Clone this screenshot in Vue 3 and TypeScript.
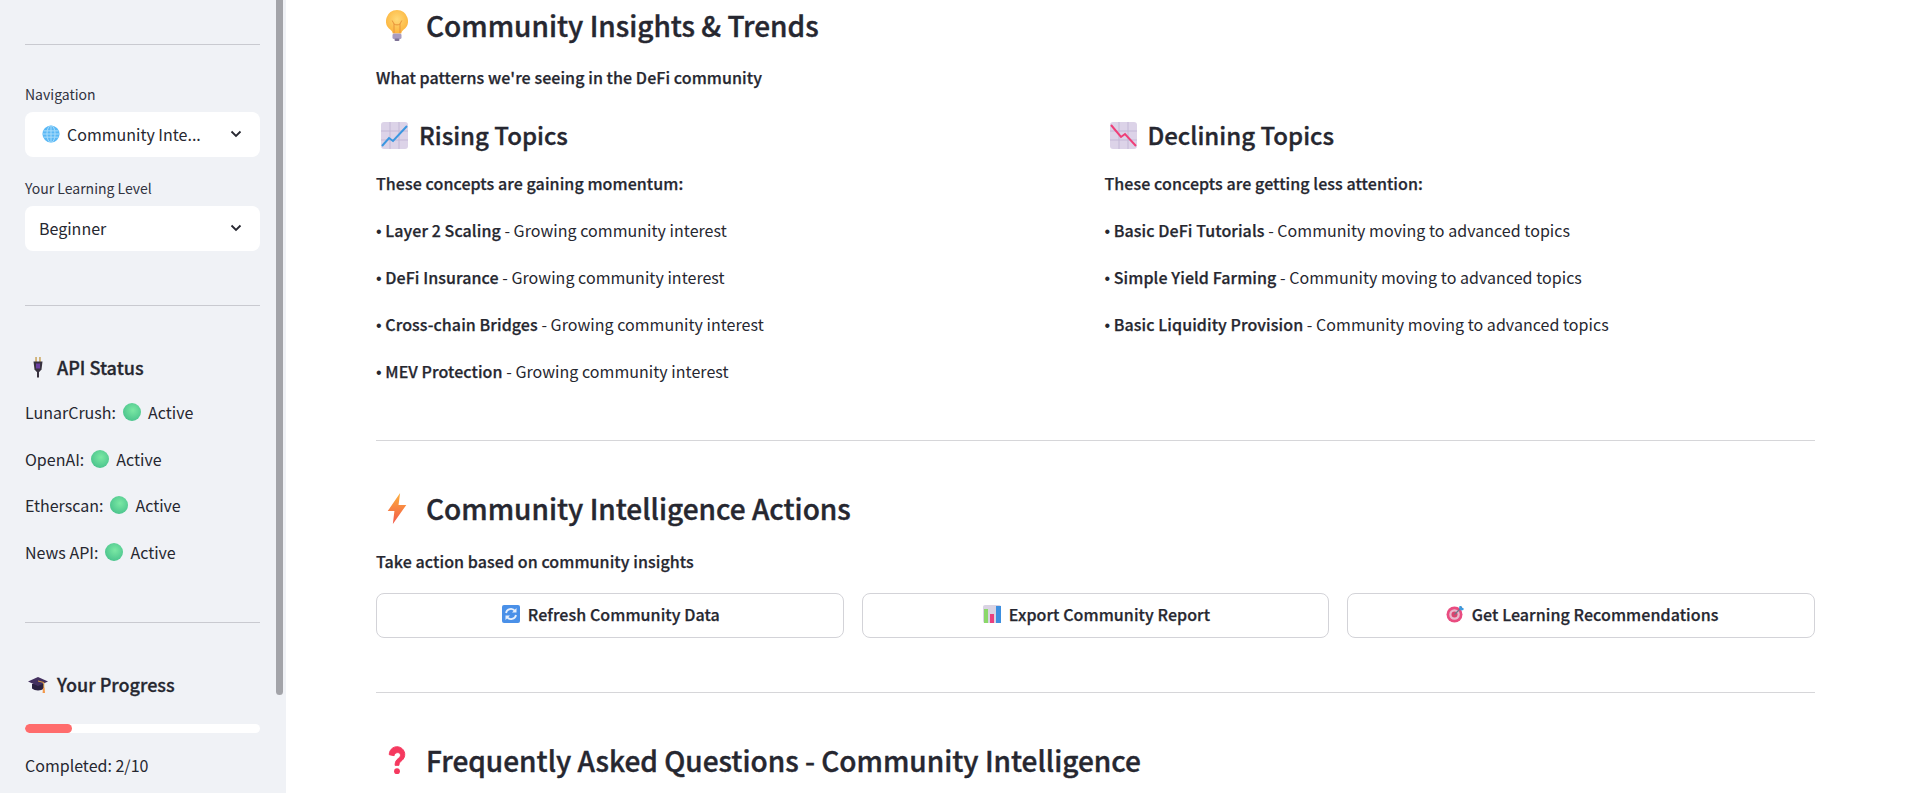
<template>
  <div class="page">
    <aside class="sidebar">
      <div class="scroll-thumb"></div>
      <hr class="side-rule first" />

      <label class="field-label">Navigation</label>
      <div class="select">
        <svg class="globe" viewBox="0 0 20 20">
          <circle cx="10" cy="10" r="9.500" fill="#5ab8f5" />
          <g fill="none" stroke="#a9ddfb" stroke-width="1.100">
            <ellipse cx="10" cy="10" rx="4.500" ry="9.500" />
            <path d="M10 .5v19M1.500 6.500h17M.5 10h19M1.500 13.500h17" />
          </g>
        </svg>
        <span class="select-value">Community Inte...</span>
        <svg class="chevron" viewBox="0 0 12 8"><path d="M1.500 1.500 6 6l4.500-4.500" fill="none" stroke="#262730" stroke-width="1.800" /></svg>
      </div>

      <label class="field-label second">Your Learning Level</label>
      <div class="select plain">
        <span class="select-value">Beginner</span>
        <svg class="chevron" viewBox="0 0 12 8"><path d="M1.500 1.500 6 6l4.500-4.500" fill="none" stroke="#262730" stroke-width="1.800" /></svg>
      </div>

      <hr class="side-rule api-rule" />

      <h4 class="side-title">
        <svg class="side-emoji" viewBox="0 0 22 22">
          <path d="M8.300 1h1.500v5H8.300zM12.200 1h1.500v5h-1.500z" fill="#c9a45a" />
          <path d="M6.500 5.500h9l-1 8-2.300 2.500h-2.400l-2.300-2.500z" fill="#38323f" />
          <rect x="9" y="7.500" width="4" height="5" fill="#6b3fa0" />
          <rect x="10" y="15" width="2" height="6.500" fill="#38323f" />
        </svg>
        API Status
      </h4>
      <p v-for="api in apis" :key="api" class="status-row">
        {{ api }}:
        <span class="dot"></span>
        Active
      </p>

      <hr class="side-rule progress-rule" />

      <h4 class="side-title">
        <svg class="side-emoji" viewBox="0 0 22 22">
          <path d="M5 11v4.500c3 2.500 9 2.500 12 0V11z" fill="#2a2140" />
          <path d="M1 8.500 11 4l10 4.500L11 13z" fill="#43305f" />
          <path d="M11 8l5.800 1.500v5" fill="none" stroke="#e0a040" stroke-width="1" />
          <path d="M16 14.500h1.600l.4 5.500h-2.400z" fill="#f2994a" />
        </svg>
        Your Progress
      </h4>
      <div class="progress"><div class="progress-fill" :style="{ width: progress + '%' }"></div></div>
      <p class="completed">Completed: 2/10</p>
    </aside>

    <main class="content">
      <h3 class="section-title top">
        <svg class="title-emoji" viewBox="0 0 22 31">
          <defs>
            <radialGradient id="bulbFill" cx="0.5" cy="0.4" r="0.6">
              <stop offset="0" stop-color="#ffd977" />
              <stop offset="1" stop-color="#fcb43c" />
            </radialGradient>
          </defs>
          <path d="M11 0a11 11 0 0 0-6.500 19.800c1.500 1.200 2 2.200 2.200 3.700h8.600c.2-1.500.7-2.500 2.200-3.700A11 11 0 0 0 11 0z" fill="url(#bulbFill)" />
          <path d="M8 23V14l-1.800-3.500M14 23v-9l1.800-3.500M8 14c2 1.200 4 1.200 6 0" fill="none" stroke="#e8933a" stroke-width="1" />
          <rect x="6.500" y="23.500" width="9" height="5.500" rx="1.500" fill="#a99cc0" />
          <rect x="8.500" y="28.500" width="5" height="2.500" rx="1.200" fill="#7d7196" />
        </svg>
        Community Insights &amp; Trends
      </h3>
      <p class="lead"><strong>What patterns we're seeing in the DeFi community</strong></p>

      <div class="columns">
        <section v-for="col in topicColumns" :key="col.title" class="topic-col">
          <h4 class="topic-title">
            <svg class="topic-emoji" viewBox="0 0 27 27">
              <rect width="27" height="27" rx="3" fill="#dcd3e8" />
              <path d="M9 0v27M18 0v27M0 9h27M0 18h27" stroke="#c3b8d6" stroke-width="1" />
              <path v-if="col.rising" d="M1 24l7-8 4 3L26 4" fill="none" stroke="#3b97e0" stroke-width="2" />
              <path v-else d="M1 3l10 12 4-3 11 12" fill="none" stroke="#ef3f78" stroke-width="2" />
            </svg>
            {{ col.title }}
          </h4>
          <p class="topic-intro"><strong>{{ col.intro }}</strong></p>
          <p v-for="item in col.items" :key="item" class="topic-item">
            <span class="bullet">•</span> <strong>{{ item }}</strong> - {{ col.note }}
          </p>
        </section>
      </div>

      <hr class="main-rule actions-rule" />

      <h3 class="section-title">
        <svg class="title-emoji bolt" viewBox="0 0 18 30">
          <defs>
            <linearGradient id="boltFill" x1="0" y1="0" x2="0" y2="1">
              <stop offset="0" stop-color="#fdb03c" />
              <stop offset="1" stop-color="#f2584a" />
            </linearGradient>
          </defs>
          <path d="M12 0 0 17.500h6.500L5 30 18 11.500h-7.500z" fill="url(#boltFill)" />
        </svg>
        Community Intelligence Actions
      </h3>
      <p class="lead"><strong>Take action based on community insights</strong></p>

      <div class="actions">
        <button class="action-btn">
          <svg class="btn-emoji" viewBox="0 0 18 18">
            <rect width="18" height="18" rx="2" fill="#4a90e8" />
            <path d="M4 8a5 5 0 0 1 9-2M14 10a5 5 0 0 1-9 2" fill="none" stroke="#e8f0fc" stroke-width="1.800" />
            <path d="M14.500 3v4.500H10zM3.500 15v-4.500H8z" fill="#e8f0fc" />
          </svg>
          Refresh Community Data
        </button>
        <button class="action-btn">
          <svg class="btn-emoji" viewBox="0 0 18 18">
            <rect width="18" height="18" rx="2" fill="#d9d3e3" />
            <rect x="1" y="4" width="4" height="14" fill="#8bd86a" />
            <rect x="7" y="9" width="4" height="9" fill="#ea3f7f" />
            <rect x="13" y="1" width="5" height="17" fill="#3d8fe0" />
          </svg>
          Export Community Report
        </button>
        <button class="action-btn">
          <svg class="btn-emoji" viewBox="0 0 18 18">
            <circle cx="8.500" cy="9.500" r="8" fill="#e94c80" />
            <circle cx="8.500" cy="9.500" r="5.300" fill="#e8b8cc" />
            <circle cx="8.500" cy="9.500" r="3" fill="#d9446f" />
            <path d="M8.500 9.500 16 2" stroke="#6d7a8c" stroke-width="1.300" />
            <path d="M13.500 1h2v2h2v2l-2.500.5-2-2z" fill="#3d9be0" />
          </svg>
          Get Learning Recommendations
        </button>
      </div>

      <hr class="main-rule faq-rule" />

      <h3 class="section-title">
        <svg class="title-emoji" viewBox="0 0 22 32">
          <path d="M3 10a8 8 0 1 1 13 6c-2 1.800-3 2.500-3 5h-4c0-4 1.500-5.500 3.500-7.200 2-1.600 2.200-2.600 2-3.800-.5-3-5.500-3-6.500 1z" fill="#f5395f" stroke="#f5395f" stroke-width="1" />
          <circle cx="11" cy="27" r="3" fill="#f5395f" />
        </svg>
        Frequently Asked Questions - Community Intelligence
      </h3>
    </main>
  </div>
</template>

<script setup lang="ts">
interface TopicColumn {
  title: string
  rising: boolean
  intro: string
  note: string
  items: string[]
}

const apis = ['LunarCrush', 'OpenAI', 'Etherscan', 'News API']
const progress = 20

const topicColumns: TopicColumn[] = [
  {
    title: 'Rising Topics',
    rising: true,
    intro: 'These concepts are gaining momentum:',
    note: 'Growing community interest',
    items: ['Layer 2 Scaling', 'DeFi Insurance', 'Cross-chain Bridges', 'MEV Protection']
  },
  {
    title: 'Declining Topics',
    rising: false,
    intro: 'These concepts are getting less attention:',
    note: 'Community moving to advanced topics',
    items: ['Basic DeFi Tutorials', 'Simple Yield Farming', 'Basic Liquidity Provision']
  }
]
</script>

<style>
html,
body {
  height: 100%;
  overflow: hidden;
  background: #fff;
}
</style>

<style scoped>
.page {
  display: flex;
  height: 793px;
  overflow: hidden;
  font-family: "Noto Sans CJK SC", "Noto Sans", sans-serif;
  font-size: 16px;
  color: #262730;
}

/* sidebar */
.sidebar {
  position: relative;
  flex: 0 0 286px;
  box-sizing: border-box;
  padding: 44px 26px 0 25px;
  background: #f0f2f6;
}

.scroll-thumb {
  position: absolute;
  top: 0;
  right: 3px;
  width: 7px;
  height: 695px;
  background: #a3a4a9;
  border-radius: 0 0 4px 4px;
}

.side-rule {
  margin: 0;
  border: none;
  border-top: 1px solid #c9cad0;
}

.api-rule {
  margin-top: 54px;
}

.progress-rule {
  margin-top: 58px;
}

.field-label {
  display: block;
  margin-top: 39px;
  height: 20px;
  font-size: 14px;
  line-height: 20px;
  color: #31333f;
}

.field-label.second {
  margin-top: 21px;
}

.select {
  display: flex;
  align-items: center;
  box-sizing: border-box;
  height: 45px;
  margin-top: 8px;
  padding: 0 18px 2px 17px;
  background: #fff;
  border-radius: 8px;
}

.select.plain {
  padding-left: 14px;
}

.globe {
  flex: none;
  width: 18px;
  height: 18px;
  margin-right: 7px;
}

.select-value {
  flex: 1;
  white-space: nowrap;
}

.chevron {
  flex: none;
  width: 12px;
  height: 8px;
}

.side-title {
  display: flex;
  align-items: center;
  margin: 47px 0 0;
  height: 28px;
  font-size: 18px;
  font-weight: 500;
  line-height: 28px;
  -webkit-text-stroke: 0.3px currentColor;
}

.side-emoji {
  flex: none;
  width: 22px;
  height: 22px;
  margin: 0 8px 0 2px;
}

.status-row {
  display: flex;
  align-items: center;
  gap: 7px;
  height: 24px;
  margin: 0 0 22.500px;
  white-space: nowrap;
}

.side-title + .status-row {
  margin-top: 19px;
}

.dot {
  width: 18px;
  height: 18px;
  border-radius: 50%;
  background: radial-gradient(circle at 55% 40%, #7be8a4, #4bc48d 75%, #45a88c);
}

.progress {
  height: 9px;
  margin-top: 26px;
  background: #fff;
  border-radius: 5px;
  overflow: hidden;
}

.progress-fill {
  height: 100%;
  background: #ff6c6c;
  border-radius: 5px;
}

.completed {
  margin: 20px 0 0;
  line-height: 24px;
}

/* main column */
.content {
  flex: 1;
  min-width: 0;
  padding: 4px 102px 0 90px;
}

.section-title {
  display: flex;
  align-items: center;
  height: 42px;
  margin: 0;
  font-size: 28px;
  font-weight: 500;
  line-height: 42px;
  white-space: nowrap;
  -webkit-text-stroke: 0.4px currentColor;
}

.title-emoji {
  flex: none;
  width: 22px;
  height: 31px;
  margin: 0 18px 0 10px;
}

.title-emoji.bolt {
  width: 20px;
  margin-left: 11px;
  margin-right: 19px;
}

.lead {
  margin: 19px 0 0;
  line-height: 24px;
  height: 24px;
}

.lead strong,
.topic-intro strong,
.topic-item strong {
  font-weight: 500;
  letter-spacing: 0.08px;
  -webkit-text-stroke: 0.25px currentColor;
}

.columns {
  display: grid;
  grid-template-columns: 1fr 1fr;
  column-gap: 18px;
  margin-top: 28px;
}

.topic-title {
  display: flex;
  align-items: center;
  height: 36px;
  margin: 0;
  font-size: 24px;
  font-weight: 500;
  line-height: 36px;
  -webkit-text-stroke: 0.35px currentColor;
}

.topic-emoji {
  flex: none;
  width: 27px;
  height: 27px;
  margin: 0 11px 0 5px;
}

.topic-intro {
  margin: 18px 0 0;
  line-height: 24px;
}

.topic-item {
  height: 24px;
  margin: 23px 0 0;
  line-height: 24px;
  letter-spacing: 0.04px;
}

.bullet {
  font-family: "Liberation Sans", sans-serif;
}

.main-rule {
  margin: 0;
  border: none;
  border-top: 1px solid #d6d6d9;
}

.actions-rule {
  margin-top: 57px;
}

.faq-rule {
  margin-top: 54px;
}

.actions-rule + .section-title {
  margin-top: 46px;
}

.actions-rule + .section-title + .lead {
  margin-top: 20px;
}

.faq-rule + .section-title {
  margin-top: 46px;
}

.actions {
  display: grid;
  grid-template-columns: repeat(3, 1fr);
  gap: 18px;
  margin-top: 20px;
}

.action-btn {
  display: flex;
  align-items: center;
  justify-content: center;
  gap: 8px;
  height: 45px;
  padding: 0 0 3px 2px;
  background: #fff;
  border: 1px solid #d3d3d8;
  border-radius: 8px;
  font: inherit;
  font-weight: 500;
  letter-spacing: 0.08px;
  -webkit-text-stroke: 0.25px currentColor;
  color: #262730;
  cursor: pointer;
}

.btn-emoji {
  flex: none;
  width: 18px;
  height: 18px;
}
</style>
